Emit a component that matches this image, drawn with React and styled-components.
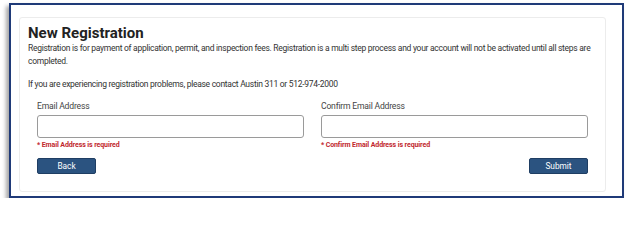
import styled, { createGlobalStyle } from 'styled-components';

const GlobalStyle = createGlobalStyle`
  body {
    margin: 0;
    background: #fff;
    font-family: Roboto, "Liberation Sans", Arial, sans-serif;
  }
`;

const Frame = styled.div`
  box-sizing: border-box;
  width: 615px;
  height: 195px;
  margin: 3px 0 0 9px;
  border: 2px solid #1f3a78;
  padding: 12px 16px 4px 8px;
  background: #fff;
  box-shadow: -3px 3px 4px rgba(0, 0, 0, 0.35);
`;

const Card = styled.div`
  box-sizing: border-box;
  height: 100%;
  border: 1px solid #ececec;
  border-radius: 3px;
  padding: 6px 0 0;
`;

const Intro = styled.div`
  padding: 0 2px 0 8px;
  color: #333;
`;

const Title = styled.h2`
  margin: 0;
  font-size: 15px;
  line-height: 18px;
  font-weight: 700;
  color: #222;
`;

const Text = styled.p`
  margin: 0 0 ${(p) => p.$gap || 0}px;
  font-size: 8.5px;
  letter-spacing: -0.28px;
  line-height: 12.6px;
  color: #333;
`;

const Form = styled.div`
  display: grid;
  grid-template-columns: 1fr 1fr;
  column-gap: 17px;
  padding: 9px 17px 0;
`;

const Field = styled.div`
  display: flex;
  flex-direction: column;
`;

const Label = styled.label`
  font-size: 8.6px;
  letter-spacing: -0.2px;
  line-height: 12px;
  color: #444;
  margin-bottom: 3px;
`;

const Input = styled.input`
  box-sizing: border-box;
  height: 23px;
  width: 100%;
  border: 1px solid #9a9a9a;
  border-radius: 3px;
  background: #fff;
  font-family: inherit;
`;

const Error = styled.span`
  margin-top: 2px;
  font-size: 7px;
  letter-spacing: -0.1px;
  line-height: 10px;
  font-weight: 700;
  color: #c1272d;
`;

const Actions = styled.div`
  display: flex;
  justify-content: space-between;
  padding: 8px 17px 0;
`;

const Button = styled.button`
  box-sizing: border-box;
  width: 59px;
  height: 16px;
  border: 1px solid #1f3e63;
  border-radius: 2px;
  background: #2b5380;
  color: #fff;
  font-family: inherit;
  font-size: 8.3px;
  padding: 0;
  cursor: pointer;
`;

export default function App() {
  return (
    <>
      <GlobalStyle />
      <Frame>
        <Card>
          <Intro>
            <Title>New Registration</Title>
            <Text $gap={11}>
              Registration is for payment of application, permit, and inspection fees. Registration is a multi step
              process and your account will not be activated until all steps are completed.
            </Text>
            <Text>If you are experiencing registration problems, please contact Austin 311 or 512-974-2000</Text>
          </Intro>
          <Form>
            <Field>
              <Label>Email Address</Label>
              <Input type="email" />
              <Error>* Email Address is required</Error>
            </Field>
            <Field>
              <Label>Confirm Email Address</Label>
              <Input type="email" />
              <Error>* Confirm Email Address is required</Error>
            </Field>
          </Form>
          <Actions>
            <Button>Back</Button>
            <Button>Submit</Button>
          </Actions>
        </Card>
      </Frame>
    </>
  );
}
